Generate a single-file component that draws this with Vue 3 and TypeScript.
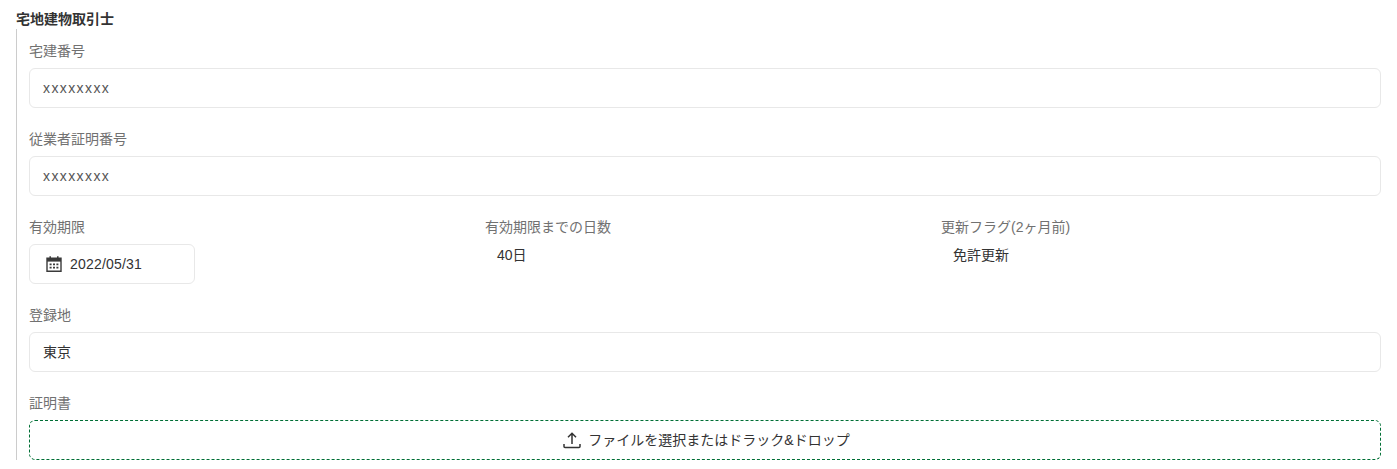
<script setup lang="ts">
const textFields = [
  { label: '宅建番号', value: 'xxxxxxxx' },
  { label: '従業者証明番号', value: 'xxxxxxxx' },
]
</script>

<template>
  <main class="page">
    <h2 class="title">宅地建物取引士</h2>
    <section class="group">
      <div v-for="f in textFields" :key="f.label" class="field">
        <label class="label">{{ f.label }}</label>
        <div class="input masked">{{ f.value }}</div>
      </div>
      <div class="columns">
        <div class="field">
          <label class="label">有効期限</label>
          <div class="input date">
            <svg class="cal" width="18" height="18" viewBox="0 0 18 18" fill="none" aria-hidden="true">
              <path d="M2 3.2h14v13H2z" stroke="#3a3a3a" stroke-width="1.4" />
              <path d="M2 3.2h14v3.4H2z" fill="#3a3a3a" />
              <path d="M5.2 1.2v3M12.8 1.2v3" stroke="#3a3a3a" stroke-width="1.5" />
              <path d="M4.6 8.6h2v1.6h-2zM8 8.6h2v1.6H8zM11.4 8.6h2v1.6h-2zM4.6 11.8h2v1.6h-2zM8 11.8h2v1.6H8zM11.4 11.8h2v1.6h-2z" fill="#3a3a3a" />
            </svg>
            <span class="date-text">2022/05/31</span>
          </div>
        </div>
        <div class="field">
          <label class="label">有効期限までの日数</label>
          <div class="static">40日</div>
        </div>
        <div class="field">
          <label class="label">更新フラグ(2ヶ月前)</label>
          <div class="static">免許更新</div>
        </div>
      </div>
      <div class="field">
        <label class="label">登録地</label>
        <div class="input">東京</div>
      </div>
      <div class="field">
        <label class="label">証明書</label>
        <div class="drop">
          <svg width="18" height="18" viewBox="0 0 18 18" fill="none" aria-hidden="true">
            <path d="M9 13V2.5M5 6.3 9 2.3l4 4" stroke="#333" stroke-width="1.5" />
            <path d="M1 13v2.5a1 1 0 0 0 1 1h14a1 1 0 0 0 1-1V13" stroke="#333" stroke-width="1.5" />
          </svg>
          <span>ファイルを選択またはドラック&amp;ドロップ</span>
        </div>
      </div>
    </section>
  </main>
</template>

<style scoped>
.page {
  box-sizing: border-box;
  padding: 9px 16px 0;
  font-family: "Liberation Sans", "Noto Sans CJK JP", sans-serif;
  font-size: 14px;
  line-height: 20px;
  color: #333;
}
.title {
  margin: 0;
  font-size: 14px;
  line-height: 20px;
  font-weight: 700;
}
.group {
  display: flex;
  flex-direction: column;
  gap: 21px;
  border-left: 1px solid #ccc;
  padding: 12px 0 0 12px;
}
.field {
  display: flex;
  flex-direction: column;
  gap: 7px;
}
.label {
  color: #717171;
}
.input {
  box-sizing: border-box;
  height: 40px;
  display: flex;
  align-items: center;
  padding: 0 13px;
  border: 1px solid #e8e8e8;
  border-radius: 6px;
  background: #fff;
}
.masked {
  letter-spacing: 1.4px;
  color: #555;
}
.columns {
  display: grid;
  grid-template-columns: repeat(3, 1fr);
  gap: 16px;
}
.date {
  width: 166px;
  gap: 7px;
  padding-left: 15px;
}
.date-text {
  letter-spacing: 0.2px;
}
.static {
  padding: 1px 12px;
}
.drop {
  box-sizing: border-box;
  height: 40px;
  display: flex;
  align-items: center;
  justify-content: center;
  gap: 7px;
  padding-left: 3px;
  border: 1px dashed #006f35;
  border-radius: 6px;
}
</style>
